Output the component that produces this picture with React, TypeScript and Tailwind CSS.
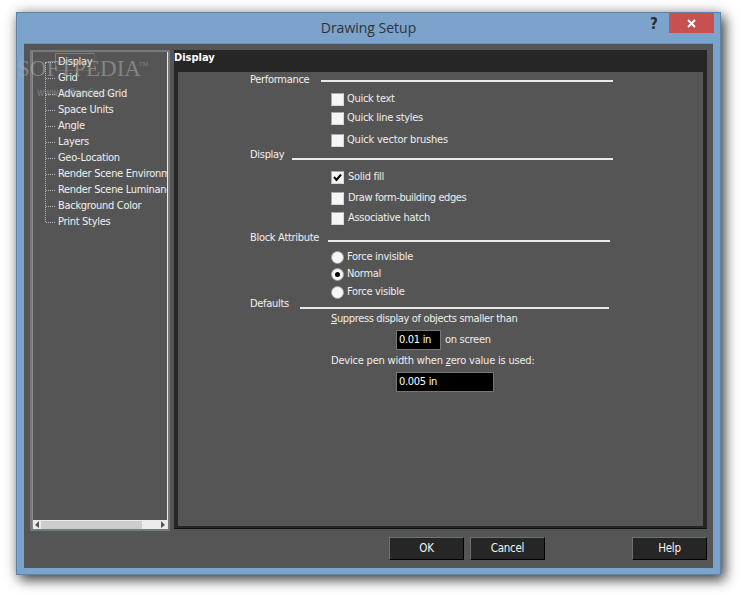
import React from "react";

const font = "font-['DejaVu_Sans',sans-serif] font-stretch-condensed";

function Section({ label, lineClass, labelClass, widthClass }: { label: string; lineClass: string; labelClass: string; widthClass: string }) {
  return (
    <div className={`flex items-center h-[14px] ${labelClass}`}>
      <span className={`whitespace-nowrap text-[#f0f0f0] shrink-0 ${widthClass}`}>{label}</span>
      <span className={`h-[2px] bg-[#e8e8e8] ${lineClass}`} />
    </div>
  );
}

function Check({ label, checked, className, gap }: { label: string; checked?: boolean; className: string; gap: string }) {
  return (
    <div className={`flex items-center h-[14px] ml-[81px] ${className}`}>
      <span className="w-[13px] h-[13px] bg-[#f6f6f6] border border-t-[#a8a8a8] border-l-[#a8a8a8] border-r-[#d8d8d8] border-b-[#d8d8d8] flex items-center justify-center shrink-0">
        {checked && (
          <svg width="9" height="9" viewBox="0 0 9 9">
            <path d="M1 4 L3.5 7 L8 1.5" fill="none" stroke="#000" strokeWidth="2" />
          </svg>
        )}
      </span>
      <span className={`whitespace-nowrap text-[#eeeeee] ${gap}`}>{label}</span>
    </div>
  );
}

function Radio({ label, checked, className }: { label: string; checked?: boolean; className: string }) {
  return (
    <div className={`flex items-center h-[14px] ml-[81px] ${className}`}>
      <span className="w-[13px] h-[13px] rounded-full bg-[#f6f6f6] border border-[#a0a0a0] flex items-center justify-center shrink-0">
        {checked && <span className="w-[5px] h-[5px] rounded-full bg-black" />}
      </span>
      <span className="whitespace-nowrap text-[#eeeeee] ml-[3px]">{label}</span>
    </div>
  );
}

function DialogButton({ label, className }: { label: string; className: string }) {
  return (
    <button className={`w-[75px] h-[23px] shrink-0 bg-[#262626] text-[#f4f4f4] border border-t-[#6a7272] border-l-[#6a7272] border-r-black border-b-black text-center ${className}`}>
      {label}
    </button>
  );
}

const items = [
  "Display",
  "Grid",
  "Advanced Grid",
  "Space Units",
  "Angle",
  "Layers",
  "Geo-Location",
  "Render Scene Environment",
  "Render Scene Luminance",
  "Background Color",
  "Print Styles",
];

export default function App() {
  return (
    <div className={`relative w-[741px] h-[595px] bg-white pt-3 pl-4 overflow-hidden text-[11px] tracking-[-0.3px] ${font}`}>
      <div className="w-[705px] h-[563px] bg-[#7ba3cc] border border-[#5d83a6] shadow-[4px_5px_12px_rgba(0,0,0,0.7),0_0_12px_rgba(0,0,0,0.2)] flex flex-col">
        <div className="h-[30px] shrink-0 flex items-start relative">
          <div className="flex-1 text-center pt-[5px] text-[14px] tracking-normal leading-[20px] text-[#333] font-['Open_Sans',sans-serif] font-stretch-normal">
            Drawing Setup
          </div>
          <span className="absolute left-[633px] top-[2px] text-[#2b2b2b] text-[15px] leading-[18px] font-bold font-['DejaVu_Sans',sans-serif]">?</span>
          <div className="absolute left-[652px] top-0 w-[45px] h-[20px] bg-[#c75050] flex items-center justify-center">
            <svg width="9" height="9" viewBox="0 0 9 9">
              <path d="M1 1 L8 8 M8 1 L1 8" stroke="#fff" strokeWidth="2" />
            </svg>
          </div>
        </div>
        <div className="mx-[7px] mb-[6px] flex-1 bg-[#555555] border-t border-[#6a8fb3] pl-[6px] pt-[6px] flex flex-col">
          <div className="flex items-start gap-[4px]">
            {/* tree */}
            <div className="relative w-[140px] h-[481px] shrink-0 border-2 border-[#757a7c] shadow-[inset_-1px_0_0_#e8e8e8,inset_1px_0_0_#8a8a8a] overflow-hidden flex flex-col">
              <div className="relative flex-1 overflow-hidden pt-[2px]">
                <div className="absolute left-[13px] top-[10px] h-[160px] border-l border-dotted border-[#b8b8b8]" />
                {items.map((t, i) => (
                  <div key={t} className="h-[16px] flex items-center whitespace-nowrap text-[#f0f0f0]">
                    <span className="ml-[14px] w-[9px] border-t border-dotted border-[#b8b8b8] shrink-0" />
                    <span className={`px-[2px] border ${i === 0 ? "border-t-[#a8743c] border-l-[#a8743c] border-r-[#6f655a] border-b-[#6f655a]" : "border-transparent"}`}>{t}</span>
                  </div>
                ))}
              </div>
              <div className="h-[9px] mx-[1px] bg-[#ececec] flex items-center shrink-0">
                <svg width="8" height="9" viewBox="0 0 8 9" className="shrink-0">
                  <path d="M6 1 L2 5 L6 8 Z" fill="#555" />
                </svg>
                <span className="w-[101px] h-[8px] bg-[#cccccc]" />
                <span className="flex-1" />
                <svg width="8" height="9" viewBox="0 0 8 9" className="shrink-0">
                  <path d="M2 1 L6 5 L2 8 Z" fill="#555" />
                </svg>
              </div>
            </div>
            {/* display panel */}
            <div className="w-[533px] h-[479px] shrink-0 bg-[#262626] flex flex-col border-b border-[#111]">
              <div className="h-[22px] shrink-0 text-white font-bold tracking-normal leading-[15px]">Display</div>
              <div className="mx-[4px] mb-[2px] flex-1 bg-[#555555] pl-[72px] pt-[1px] flex flex-col">
                <Section label="Performance" labelClass="" widthClass="w-[71px]" lineClass="w-[292px] mt-[2px]" />
                <Check label="Quick text" className="mt-[5px]" gap="ml-[3px]" />
                <Check label="Quick line styles" className="mt-[5px]" gap="ml-[3px]" />
                <Check label="Quick vector brushes" className="mt-[8px]" gap="ml-[3px] tracking-[-0.2px]" />
                <Section label="Display" labelClass="mt-[1px]" widthClass="w-[42px]" lineClass="w-[321px] mt-[8px]" />
                <Check label="Solid fill" checked className="mt-[8px]" gap="ml-[4px]" />
                <Check label="Draw form-building edges" className="mt-[7px]" gap="ml-[4px] tracking-[-0.42px]" />
                <Check label="Associative hatch" className="mt-[6px]" gap="ml-[4px]" />
                <Section label="Block Attribute" labelClass="mt-[6px]" widthClass="w-[78px]" lineClass="w-[282px] mt-[6px]" />
                <Radio label="Force invisible" className="mt-[5px]" />
                <Radio label="Normal" checked className="mt-[3px]" />
                <Radio label="Force visible" className="mt-[4px]" />
                <Section label="Defaults" labelClass="-mt-[2px]" widthClass="w-[50px]" lineClass="w-[309px] mt-[8px]" />
                <div className="ml-[81px] mt-[1px] h-[14px] leading-[14px] whitespace-nowrap text-[#eeeeee] tracking-[-0.35px]">
                  <span className="underline">S</span>uppress display of objects smaller than
                </div>
                <div className="ml-[146px] mt-[4px] flex items-center">
                  <div className="w-[45px] h-[20px] bg-black border border-[#777] text-white pl-[2px] leading-[18px]">0.01 in</div>
                  <span className="ml-[4px] text-[#eeeeee]">on screen</span>
                </div>
                <div className="ml-[81px] mt-[4px] h-[14px] leading-[14px] whitespace-nowrap text-[#eeeeee] tracking-[-0.2px]">
                  Device pen width when <span className="underline">z</span>ero value is used:
                </div>
                <div className="ml-[146px] mt-[4px] w-[98px] h-[20px] bg-black border border-[#777] text-white pl-[2px] leading-[18px]">0.005 in</div>
              </div>
            </div>
          </div>
          <div className="flex mt-[6px] pl-[359px] text-[11.5px]">
            <DialogButton label="OK" className="" />
            <DialogButton label="Cancel" className="ml-[6px]" />
            <DialogButton label="Help" className="ml-[87px]" />
          </div>
        </div>
      </div>
      <div className="absolute left-[17px] top-[57px] pointer-events-none text-[rgba(175,175,175,0.55)] font-['Liberation_Serif',serif] font-stretch-normal text-[23px] leading-[24px] tracking-normal">
        SOFTPEDIA
        <span className="absolute left-[122px] top-[3px] text-[6px] leading-[8px]">TM</span>
      </div>
      <div className="absolute left-[37px] top-[87px] pointer-events-none text-[rgba(190,190,190,0.4)] text-[10px] leading-[12px]">
        www.softpedia.com
      </div>
    </div>
  );
}
